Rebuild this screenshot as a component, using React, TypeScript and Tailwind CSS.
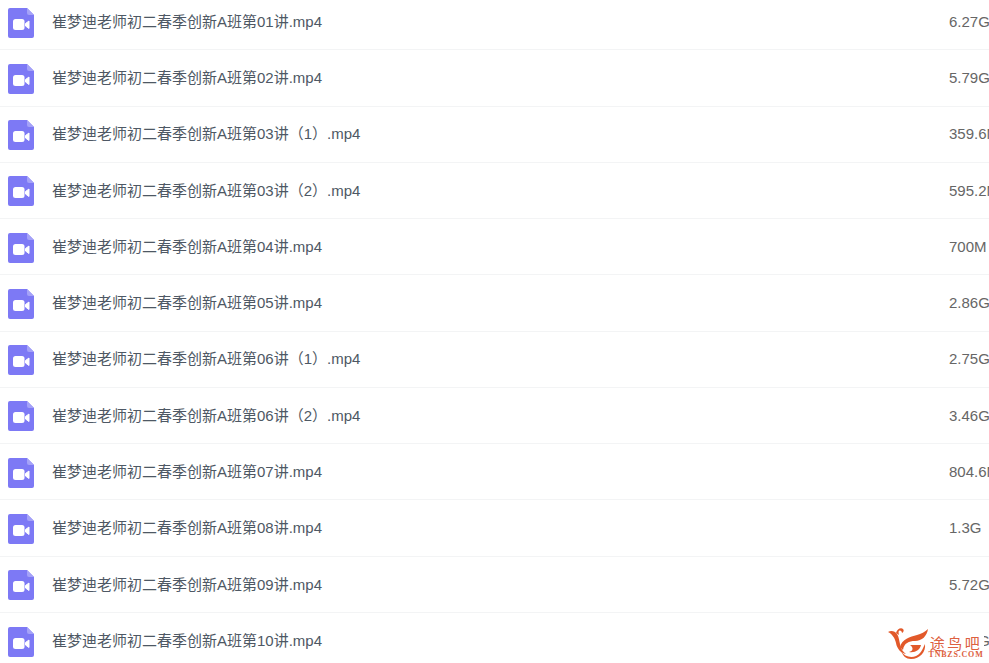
const files = [
  { name: '崔梦迪老师初二春季创新A班第01讲.mp4', size: '6.27G' },
  { name: '崔梦迪老师初二春季创新A班第02讲.mp4', size: '5.79G' },
  { name: '崔梦迪老师初二春季创新A班第03讲（1）.mp4', size: '359.6M' },
  { name: '崔梦迪老师初二春季创新A班第03讲（2）.mp4', size: '595.2M' },
  { name: '崔梦迪老师初二春季创新A班第04讲.mp4', size: '700M' },
  { name: '崔梦迪老师初二春季创新A班第05讲.mp4', size: '2.86G' },
  { name: '崔梦迪老师初二春季创新A班第06讲（1）.mp4', size: '2.75G' },
  { name: '崔梦迪老师初二春季创新A班第06讲（2）.mp4', size: '3.46G' },
  { name: '崔梦迪老师初二春季创新A班第07讲.mp4', size: '804.6M' },
  { name: '崔梦迪老师初二春季创新A班第08讲.mp4', size: '1.3G' },
  { name: '崔梦迪老师初二春季创新A班第09讲.mp4', size: '5.72G' },
  { name: '崔梦迪老师初二春季创新A班第10讲.mp4', size: '5.60G' },
];

function VideoIcon() {
  return (
    <svg width="26" height="30" viewBox="0 0 26 30" className="mt-[2px] shrink-0">
      <path d="M2 0H19L26 7V28a2 2 0 0 1-2 2H2a2 2 0 0 1-2-2V2a2 2 0 0 1 2-2Z" fill="#7d79f5" />
      <path d="M19 0L26 7H21a2 2 0 0 1-2-2Z" fill="#a5a2f8" />
      <rect x="5" y="11" width="11.5" height="11" rx="2.5" fill="#fff" />
      <path d="M17.5 15.5L21 13V20.5L17.5 18Z" fill="#fff" stroke="#fff" strokeLinejoin="round" />
    </svg>
  );
}

// watermark sits on its own white box, so it hides the last row's size
function Logo() {
  return (
    <div className="absolute left-[886px] top-[626px] flex h-[37px] w-[98px] items-start bg-white">
      <svg width="43" height="33" viewBox="0 0 43 33" className="mt-[2px] ml-[2px] shrink-0">
        <path d="M0 4C3 2 7 3 9 6C11 9 11 12 12 16C13 21 15 24 18 26C13 25 9 21 8 15C7 10 4 6 0 4Z" fill="#e2592a" />
        <path d="M8 5C9 1 13 -1 15 1C16 2 16 4 14 5C14 3 12 2 11 3C10 4 11 6 11 7Z" fill="#e2592a" />
        <path d="M12 19C14 11 22 9 29 7C33 6 37 4 40 1C39 8 34 13 27 13C21 13 16 15 15 22Z" fill="#e2592a" />
        <path d="M13 23C17 30 27 31 32 25C34 23 35 20 37 16C38 24 32 31 23 31C18 31 15 28 13 23Z" fill="#e2592a" />
        <path d="M22 17H33C32 22 27 25 21 24C25 23 26 20 22 17Z" fill="#e2592a" />
      </svg>
      <div className="mt-[8px] -ml-[1px] flex w-[52px] flex-col items-center text-[#dd6040]">
        <span className="font-['Noto_Sans_CJK_SC',sans-serif] text-[15px] leading-[17px] tracking-[2.5px] whitespace-nowrap">途鸟吧</span>
        <span className="font-['Liberation_Serif',serif] text-[8px] leading-[8px] font-bold tracking-[0.8px] whitespace-nowrap">TNBZS.COM</span>
      </div>
    </div>
  );
}

export default function App() {
  return (
    <div className="relative h-[663px] w-[989px] overflow-hidden bg-white font-['Liberation_Sans','Noto_Sans_CJK_SC',sans-serif]">
      <div className="-mt-[6px] flex flex-col">
        {files.map((file) => (
          <div key={file.name} className="flex h-[56.27px] shrink-0 items-center border-b border-[#f3f4f5] pl-[7.5px]">
            <VideoIcon />
            <div className="ml-[18.5px] w-[897px] shrink-0 truncate pt-[1px] text-[15px] text-[#4e5864]">{file.name}</div>
            <div className="shrink-0 whitespace-nowrap pt-[1px] text-[15px] text-[#666666]">{file.size}</div>
          </div>
        ))}
      </div>
      <Logo />
    </div>
  );
}
